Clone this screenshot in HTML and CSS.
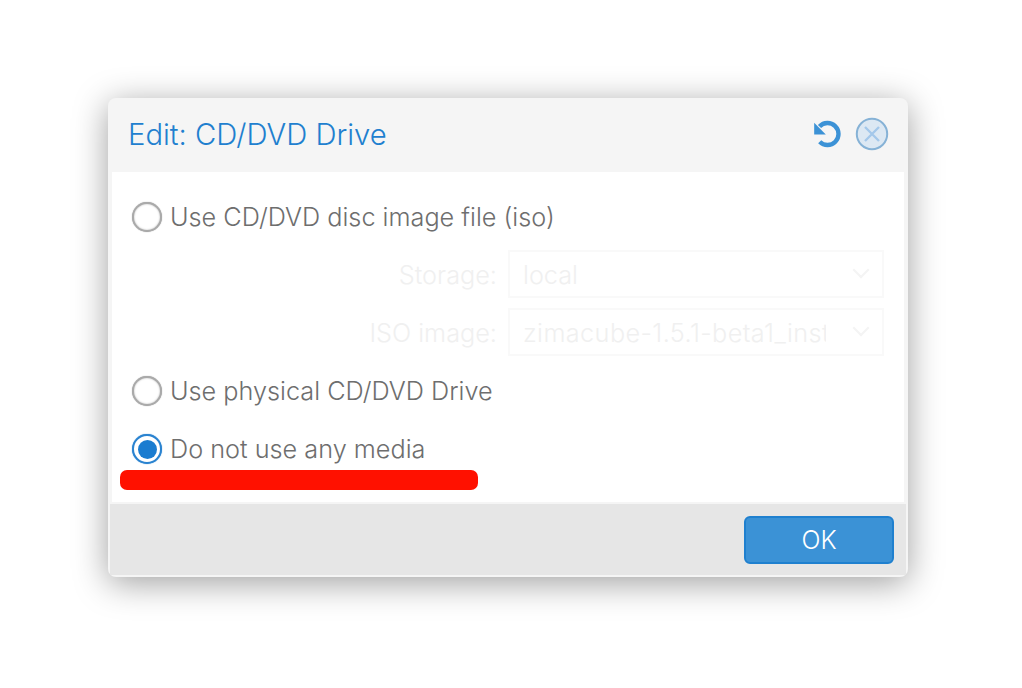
FILE: index.html
```html
<!DOCTYPE html>
<html lang="en">
<head>
    <meta charset="UTF-8">
    <meta name="viewport" content="width=device-width, initial-scale=1.0">
    <title>Edit: CD/DVD Drive</title>
    <link rel="stylesheet" href="styles.css">
</head>
<body>
    <div class="dialog">
        <div class="dialog-header">
            <h1 class="dialog-title">Edit: CD/DVD Drive</h1>
            <div class="tools">
                <svg class="tool-reset" width="30" height="30" viewBox="0 0 30 30" aria-label="Reset">
                    <path d="M6.5 7.5A11 11 0 1 1 6.7 22.8" fill="none" stroke="#3c92d6" stroke-width="4.4"/>
                    <path d="M1.2 3.8V15.4H12.8Z" fill="#3c92d6"/>
                </svg>
                <svg class="tool-close" width="34" height="34" viewBox="0 0 34 34" aria-label="Close">
                    <circle cx="17" cy="17" r="15.2" fill="#dce8f3" stroke="#86b2d6" stroke-width="2"/>
                    <path d="M10 10L24 24M24 10L10 24" stroke="#a4c8ea" stroke-width="2.4"/>
                </svg>
            </div>
        </div>

        <div class="dialog-body">
            <label class="radio-row first">
                <span class="radio"></span>
                <span>Use CD/DVD disc image file (iso)</span>
            </label>
            <div class="field">
                <span class="field-label">Storage:</span>
                <div class="select"><span class="select-value">local</span><span class="chevron"></span></div>
            </div>
            <div class="field">
                <span class="field-label">ISO image:</span>
                <div class="select"><span class="select-value wide">zimacube-1.5.1-beta1_inst</span><span class="chevron"></span></div>
            </div>
            <label class="radio-row second">
                <span class="radio"></span>
                <span>Use physical CD/DVD Drive</span>
            </label>
            <label class="radio-row third">
                <span class="radio checked"></span>
                <span>Do not use any media</span>
            </label>
        </div>

        <div class="dialog-footer">
            <button class="ok-button">OK</button>
        </div>

        <!-- red marker drawn over the screenshot -->
        <div class="marker"></div>
    </div>
</body>
</html>
```

FILE: styles.css
```css
html, body {
    margin: 0;
    height: 100%;
    background: #fff;
}
body {
    font-family: Inter, "Liberation Sans", Arial, sans-serif;
    font-weight: 300;
    padding: 98px 0 0 108px;
    box-sizing: border-box;
    overflow: hidden;
}
.dialog {
    position: relative;
    width: 800px;
    height: 479px;
    box-sizing: border-box;
    background: #f5f5f5;
    border-radius: 8px;
    padding: 0 4px 4px;
    display: flex;
    flex-direction: column;
    box-shadow: 0 6px 34px rgba(0, 0, 0, 0.38);
}
.dialog-header {
    height: 74px;
    flex: none;
    display: flex;
    align-items: center;
    justify-content: space-between;
    padding: 0 15px 2px 16px;
    box-sizing: border-box;
}
.dialog-title {
    margin: 0;
    font-size: 29.25px;
    font-weight: 300;
    color: #1f80cf;
}
.tools {
    display: flex;
    align-items: center;
    gap: 12px;
}
.dialog-body {
    height: 330px;
    flex: none;
    background: #fff;
    padding: 0 20px;
    box-sizing: border-box;
    font-size: 25.25px;
    color: #6e6e6e;
}
.radio-row {
    display: flex;
    align-items: center;
    gap: 8px;
    height: 30px;
}
.radio-row.first {
    margin-top: 30px;
}
.radio-row.second {
    margin-top: 20px;
}
.radio-row.third {
    margin-top: 28px;
}
.radio {
    width: 26px;
    height: 26px;
    border: 2px solid #aaa;
    border-radius: 50%;
    flex: none;
    background: #fff;
    box-shadow: 0 0 1px #999, inset 0 0 2px #bbb;
}
.radio.checked {
    border-color: #2a83d0;
    box-shadow: 0 0 1px #2a83d0;
    position: relative;
}
.radio.checked::after {
    content: "";
    position: absolute;
    top: 3.5px;
    left: 3.5px;
    width: 19px;
    height: 19px;
    border-radius: 50%;
    background: #1a7cd0;
}
.field {
    display: flex;
    align-items: center;
    height: 48px;
    margin-top: 10px;
    color: #f0f0f0;
}
.field:nth-child(2) {
    margin-top: 18px;
}
.field-label {
    width: 376px;
    text-align: right;
    padding: 2px 11px 0 0;
    box-sizing: border-box;
    flex: none;
}
.select {
    width: 376px;
    height: 48px;
    box-sizing: border-box;
    border: 2px solid #f9f9f9;
    display: flex;
    align-items: center;
    padding: 0 0 0 13px;
}
.select-value {
    width: 303px;
    padding-top: 2px;
    white-space: nowrap;
    overflow: hidden;
    flex: none;
}
.select-value.wide {
    letter-spacing: 0.4px;
}
.chevron {
    width: 10px;
    height: 10px;
    margin: -8px 0 0 29px;
    border-right: 2px solid #f4f4f4;
    border-bottom: 2px solid #f4f4f4;
    transform: rotate(45deg);
}
.dialog-footer {
    flex: 1;
    margin: 2px -2px -2px;
    background: #e6e6e6;
    display: flex;
    align-items: flex-start;
    justify-content: flex-end;
    padding: 12px 12px 0 0;
}
.ok-button {
    width: 150px;
    height: 48px;
    background: #3b92d6;
    border: 2px solid #1f80cf;
    border-radius: 6px;
    color: #fff;
    font-family: inherit;
    font-weight: 300;
    font-size: 25px;
    cursor: pointer;
}
.marker {
    position: absolute;
    left: 12px;
    top: 372px;
    width: 358px;
    height: 20px;
    border-radius: 7px;
    background: #ff1100;
}
```
